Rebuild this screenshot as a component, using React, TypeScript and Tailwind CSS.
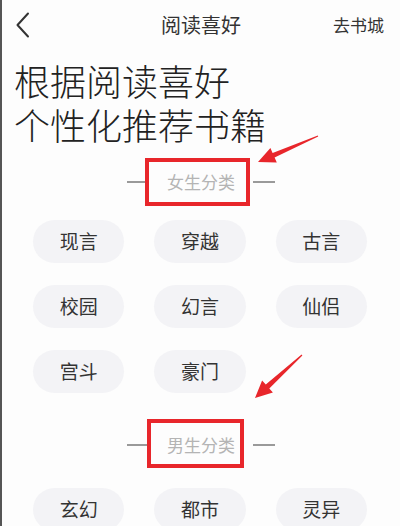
import React from "react";

type Pt = [number, number];

function arrowPoints(tail: Pt, tip: Pt, headLen = 17, headHalf = 8, shaftHalf = 2.6): string {
  const dx = tip[0] - tail[0];
  const dy = tip[1] - tail[1];
  const len = Math.hypot(dx, dy);
  const ux = dx / len;
  const uy = dy / len;
  const nx = -uy;
  const ny = ux;
  const bx = tip[0] - ux * headLen;
  const by = tip[1] - uy * headLen;
  const pts: Pt[] = [
    [tail[0] + nx * 0.6, tail[1] + ny * 0.6],
    [bx + nx * shaftHalf, by + ny * shaftHalf],
    [bx + nx * headHalf, by + ny * headHalf],
    tip,
    [bx - nx * headHalf, by - ny * headHalf],
    [bx - nx * shaftHalf, by - ny * shaftHalf],
    [tail[0] - nx * 0.6, tail[1] - ny * 0.6],
  ];
  return pts.map((p) => `${p[0].toFixed(1)},${p[1].toFixed(1)}`).join(" ");
}

const Pill = ({ label }: { label: string }) => (
  <div className="h-[43px] rounded-full bg-[#f3f3f6] flex items-center justify-center text-[19px] text-[#333]">
    {label}
  </div>
);

const SectionHeader = ({ label }: { label: string }) => (
  <div className="h-[40px] flex items-center justify-center">
    <div className="w-[22px] h-[1.5px] bg-[#9a9a9a]" />
    <div className="w-[104px] text-center text-[17px] text-[#b4b4b4]">{label}</div>
    <div className="w-[22px] h-[1.5px] bg-[#9a9a9a]" />
  </div>
);

export default function App() {
  return (
    <div
      className="relative w-[400px] h-[526px] overflow-hidden bg-[#fdfdfd] border-l-2 border-[#555]"
      style={{ fontFamily: '"Noto Sans CJK SC", "Noto Sans", sans-serif' }}
    >
      {/* Top bar */}
      <div className="h-[50px] flex items-center justify-between px-[13px] relative">
        <svg width="16" height="26" viewBox="0 0 16 26">
          <path d="M13 1.5 L2.5 13 L13 24.5" fill="none" stroke="#333" strokeWidth="2" strokeLinecap="round" strokeLinejoin="round" />
        </svg>
        <div className="absolute left-0 right-0 text-center text-[20px] text-[#333] pointer-events-none">阅读喜好</div>
        <div className="text-[17px] text-[#333] mr-[3px]">去书城</div>
      </div>

      {/* Heading */}
      <div className="mt-[8px] pl-[12px] text-[36px] leading-[44px] font-light text-[#222]">
        <div>根据阅读喜好</div>
        <div>个性化推荐书籍</div>
      </div>

      <div className="mt-[16px]">
        <SectionHeader label="女生分类" />
      </div>

      <div className="mt-[18px] grid grid-cols-3 gap-x-[30px] gap-y-[22px] pl-[31px] pr-[33px]">
        {["现言", "穿越", "古言", "校园", "幻言", "仙侣", "宫斗", "豪门"].map((t) => (
          <Pill key={t} label={t} />
        ))}
      </div>

      <div className="mt-[32px]">
        <SectionHeader label="男生分类" />
      </div>

      <div className="mt-[23px] grid grid-cols-3 gap-x-[30px] gap-y-[22px] pl-[31px] pr-[33px]">
        {["玄幻", "都市", "灵异"].map((t) => (
          <Pill key={t} label={t} />
        ))}
      </div>

      {/* Annotation overlays */}
      <div className="absolute left-[143px] top-[158px] w-[105px] h-[48px] border-[4px] border-[#e8262b]" />
      <div className="absolute left-[145px] top-[419px] w-[97px] h-[49px] border-[4px] border-[#e8262b]" />
      <svg className="absolute left-[-2px] top-0 pointer-events-none" width="400" height="526">
        <polygon points={arrowPoints([318, 136], [258, 162])} fill="#e8262b" />
        <polygon points={arrowPoints([302, 355], [255, 398])} fill="#e8262b" />
      </svg>
    </div>
  );
}
